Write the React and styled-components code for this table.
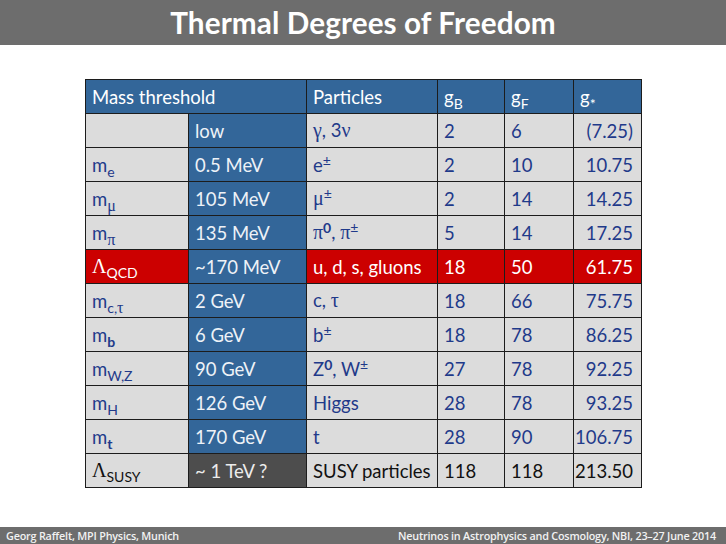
import React from 'react'
import styled, { createGlobalStyle } from 'styled-components'

const Global = createGlobalStyle`
  html, body { margin: 0; padding: 0; background: #fff; }
  body { font-family: Lato, "Open Sans", sans-serif; }
`

const Page = styled.div`
  width: 726px;
  height: 544px;
  display: flex;
  flex-direction: column;
  overflow: hidden;
`

const TitleBar = styled.header`
  height: 45px;
  background: #6d6d6d;
  color: #fff;
  display: flex;
  align-items: center;
  justify-content: center;
  font-family: Lato, sans-serif;
  font-weight: 700;
  font-size: 29.7px;
  letter-spacing: 0.1px;
`

const Main = styled.main`
  flex: 1;
  padding: 34px 0 0 85px;
`

const Table = styled.table`
  border-collapse: collapse;
  font-family: Lato, "Open Sans", sans-serif;
  font-size: 18.5px;
  border: 1px solid #1c1c1c;
`

const bgs = {
  head: '#336699',
  gray: '#dcdcdc',
  blue: '#336699',
  red: '#cc0000',
  dark: '#4d4d4d',
}

const fgs = {
  head: '#ffffff',
  gray: '#1f3a8a',
  blue: '#eef2f7',
  red: '#ffffff',
  dark: '#ececec',
}

const Cell = styled.td`
  height: 34px;
  padding: 0 ${p => (p.$right ? '8px' : '0')} 0 ${p => (p.$right ? '0' : '6px')};
  width: ${p => p.$w}px;
  box-sizing: border-box;
  background: ${p => bgs[p.$tone]};
  color: ${p => (p.$ink ? p.$ink : fgs[p.$tone])};
  text-align: ${p => (p.$right ? 'right' : 'left')};
  border: 1px solid #1c1c1c;
  white-space: nowrap;
  vertical-align: middle;
`

const Sub = styled.sub`
  font-size: 14px;
  vertical-align: -5px;
  line-height: 0;
`

const Sup = styled.sup`
  font-size: 14px;
  vertical-align: 6px;
  line-height: 0;
`

const Greek = styled.span`
  font-family: "Liberation Serif", serif;
  font-size: ${p => p.$size || 20}px;
`

const Footer = styled.footer`
  height: 17px;
  background: #6d6d6d;
  color: #f2f2f2;
  font-family: "Open Sans", sans-serif;
  font-weight: 600;
  font-size: 10.8px;
  display: flex;
  align-items: center;
  justify-content: space-between;
  padding: 0 10px 0 6px;
  letter-spacing: -0.2px;
`

const W = [103, 118, 131, 67, 69, 68]

const rows = [
  { a: null, b: 'low', c: <><Greek>γ</Greek>, 3<Greek>ν</Greek></>, d: '2', e: '6', f: '(7.25)' },
  { a: <>m<Sub>e</Sub></>, b: '0.5 MeV', c: <>e<Sup>±</Sup></>, d: '2', e: '10', f: '10.75' },
  { a: <>m<Sub><Greek $size={16}>μ</Greek></Sub></>, b: '105 MeV', c: <><Greek>μ</Greek><Sup>±</Sup></>, d: '2', e: '14', f: '14.25' },
  { a: <>m<Sub><Greek $size={16}>π</Greek></Sub></>, b: '135 MeV', c: <><Greek>π</Greek><Sup><b>0</b></Sup>, <Greek>π</Greek><Sup>±</Sup></>, d: '5', e: '14', f: '17.25' },
  { a: <><Greek>Λ</Greek><Sub>QCD</Sub></>, b: '~170 MeV', c: 'u, d, s, gluons', d: '18', e: '50', f: '61.75', red: true },
  { a: <>m<Sub>c,<Greek $size={16}>τ</Greek></Sub></>, b: '2 GeV', c: <>c, <Greek>τ</Greek></>, d: '18', e: '66', f: '75.75' },
  { a: <>m<Sub><b>b</b></Sub></>, b: '6 GeV', c: <>b<Sup>±</Sup></>, d: '18', e: '78', f: '86.25' },
  { a: <>m<Sub>W,Z</Sub></>, b: '90 GeV', c: <>Z<Sup><b>0</b></Sup>, W<Sup>±</Sup></>, d: '27', e: '78', f: '92.25' },
  { a: <>m<Sub>H</Sub></>, b: '126 GeV', c: 'Higgs', d: '28', e: '78', f: '93.25' },
  { a: <>m<Sub><b>t</b></Sub></>, b: '170 GeV', c: 't', d: '28', e: '90', f: '106.75' },
  { a: <><Greek>Λ</Greek><Sub>SUSY</Sub></>, b: '~ 1 TeV ?', c: 'SUSY particles', d: '118', e: '118', f: '213.50', last: true },
]

const App = () => {
  return (
    <Page>
      <Global />
      <TitleBar>Thermal Degrees of Freedom</TitleBar>
      <Main>
        <Table>
          <tbody>
            <tr>
              <Cell $tone="head" colSpan={2} $w={W[0] + W[1]}>Mass threshold</Cell>
              <Cell $tone="head" $w={W[2]}>Particles</Cell>
              <Cell $tone="head" $w={W[3]}>g<Sub>B</Sub></Cell>
              <Cell $tone="head" $w={W[4]}>g<Sub>F</Sub></Cell>
              <Cell $tone="head" $w={W[5]}>g<Sub>*</Sub></Cell>
            </tr>
            {rows.map((r, i) => {
              const tone = r.red ? 'red' : 'gray'
              const ink = r.last ? '#111' : undefined
              return (
                <tr key={i}>
                  <Cell $tone={tone} $ink={ink} $w={W[0]}>{r.a}</Cell>
                  <Cell $tone={r.last ? 'dark' : 'blue'} $w={W[1]}>{r.b}</Cell>
                  <Cell $tone={tone} $ink={ink} $w={W[2]}>{r.c}</Cell>
                  <Cell $tone={tone} $ink={ink} $w={W[3]}>{r.d}</Cell>
                  <Cell $tone={tone} $ink={ink} $w={W[4]}>{r.e}</Cell>
                  <Cell $tone={tone} $ink={ink} $w={W[5]} $right>{r.f}</Cell>
                </tr>
              )
            })}
          </tbody>
        </Table>
      </Main>
      <Footer>
        <span>Georg Raffelt, MPI Physics, Munich</span>
        <span>Neutrinos in Astrophysics and Cosmology, NBI, 23–27 June 2014</span>
      </Footer>
    </Page>
  )
}

export default App
